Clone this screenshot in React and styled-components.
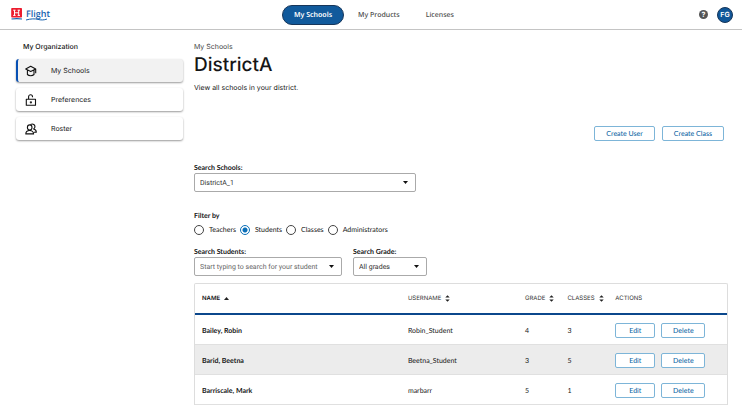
import React, { useState } from 'react'
import styled, { createGlobalStyle } from 'styled-components'

const students = [
    { name: 'Bailey, Robin', username: 'Robin_Student', grade: 4, classes: 3 },
    { name: 'Barid, Beetna', username: 'Beetna_Student', grade: 3, classes: 5 },
    { name: 'Barriscale, Mark', username: 'marbarr', grade: 5, classes: 1 },
]

const roles = ['Teachers', 'Students', 'Classes', 'Administrators']

function App() {
    const [role, setRole] = useState('Students')

    return (
        <>
            <GlobalStyle />
            <Header>
                <Logo href="#" aria-label="Flight">
                    <LogoMark />
                    <LogoText>
                        Flight
                        <LogoLine />
                    </LogoText>
                </Logo>
                <Nav>
                    <NavLink href="#" $active>My Schools</NavLink>
                    <NavLink href="#">My Products</NavLink>
                    <NavLink href="#">Licenses</NavLink>
                </Nav>
                <Account>
                    <HelpButton type="button" aria-label="Help">?</HelpButton>
                    <Avatar type="button">FG</Avatar>
                </Account>
            </Header>
            <Page>
                <Sidebar>
                    <SidebarTitle>My Organization</SidebarTitle>
                    <SidebarLink href="#" $active><CapIcon />My Schools</SidebarLink>
                    <SidebarLink href="#"><LockIcon />Preferences</SidebarLink>
                    <SidebarLink href="#"><PeopleIcon />Roster</SidebarLink>
                </Sidebar>
                <Main>
                    <Breadcrumb href="#">My Schools</Breadcrumb>
                    <Title>DistrictA</Title>
                    <Description>View all schools in your district.</Description>
                    <CreateActions>
                        <Button type="button">Create User</Button>
                        <Button type="button">Create Class</Button>
                    </CreateActions>

                    <Field $width="222px">
                        <Label htmlFor="schools">Search Schools:</Label>
                        <Control>
                            <Select id="schools"><option>DistrictA_1</option></Select>
                            <Caret />
                        </Control>
                    </Field>

                    <Filter>
                        <Legend>Filter by</Legend>
                        <Radios>
                            {roles.map((item) => (
                                <RadioLabel key={item}>
                                    <Radio
                                        type="radio"
                                        name="role"
                                        value={item}
                                        checked={role === item}
                                        onChange={() => setRole(item)}
                                    />
                                    {item}
                                </RadioLabel>
                            ))}
                        </Radios>
                    </Filter>

                    <SearchRow>
                        <Field $width="148px">
                            <Label htmlFor="students">Search Students:</Label>
                            <Control>
                                <Input id="students" placeholder="Start typing to search for your student" />
                                <Caret />
                            </Control>
                        </Field>
                        <Field $width="74px">
                            <Label htmlFor="grade">Search Grade:</Label>
                            <Control>
                                <Select id="grade"><option>All grades</option></Select>
                                <Caret />
                            </Control>
                        </Field>
                    </SearchRow>

                    <TableFrame>
                        <Table>
                            <thead>
                                <tr>
                                    <Th $width="38.7%" $strong>Name<SortUp /></Th>
                                    <Th $width="22%">Username<SortBoth /></Th>
                                    <Th $width="8%">Grade<SortBoth /></Th>
                                    <Th $width="9%">Classes<SortBoth /></Th>
                                    <Th>Actions</Th>
                                </tr>
                            </thead>
                            <tbody>
                                {students.map((student) => (
                                    <Row key={student.username}>
                                        <Td $strong>{student.name}</Td>
                                        <Td>{student.username}</Td>
                                        <Td>{student.grade}</Td>
                                        <Td>{student.classes}</Td>
                                        <Td>
                                            <RowActions>
                                                <Button type="button" $width="40px">Edit</Button>
                                                <Button type="button" $width="44px">Delete</Button>
                                            </RowActions>
                                        </Td>
                                    </Row>
                                ))}
                            </tbody>
                        </Table>
                    </TableFrame>
                </Main>
            </Page>
        </>
    )
}

export default App

function LogoMark() {
    return (
        <svg width="12" height="12" viewBox="0 0 12 12" aria-hidden="true">
            <rect x="0.2" y="0" width="10.8" height="9.6" rx="0.8" fill="#ec1c2e" />
            <path d="M2.2 2.2h2.4M2.2 7.4h2.4M6.6 2.2H9M6.6 7.4H9M3.5 2.2v5.2M7.7 2.2v5.2M3.5 4.8h4.2" stroke="#fff" strokeWidth="1" fill="none" />
            <path d="M0.5 11c3.5-.4 7-.4 10.5 0" stroke="#1560ae" strokeWidth="1.2" fill="none" />
        </svg>
    )
}

function LogoLine() {
    return (
        <LogoLineSvg viewBox="0 0 24 3" aria-hidden="true">
            <path d="M0 2C5 .6 9 .6 12 1.4S18 2.2 21 1" stroke="#1560ae" strokeWidth="1" fill="none" />
        </LogoLineSvg>
    )
}

function CapIcon() {
    return (
        <Icon viewBox="0 0 12 12">
            <path d="M.7 3.9 5.7 1.2 10.7 3.9 5.7 6.4zM2.4 4.9v4.6c1.6 1.7 5 1.7 6.6 0V4.9M10.7 3.9v4.3" />
        </Icon>
    )
}

function LockIcon() {
    return (
        <Icon viewBox="0 0 12 12">
            <path d="M1.3 5.2h9.2v6H1.3zM3.6 5.2V2.8c0-2.7 3.9-2.7 3.9 0v.4M5.9 7.2v2.2M4.8 8.3H7" />
        </Icon>
    )
}

function PeopleIcon() {
    return (
        <Icon viewBox="0 0 12 12">
            <path d="M2.4 4.6c0-3.6 4.6-3.6 4.6 0 0 3.2-4.6 3.2-4.6 0zM.8 10.9c0-4.6 7.8-4.6 7.8 0zM5.6 1.5c2.2-1.4 4.9.4 4.2 2.9-.2.8-.7 1.3-1.2 1.6 1.7.3 2.7 1.6 2.7 3.3H9" />
        </Icon>
    )
}

function Caret() {
    return (
        <CaretSvg width="5" height="3" viewBox="0 0 5 3" aria-hidden="true">
            <path d="M0 0h5L2.5 3z" fill="#111" />
        </CaretSvg>
    )
}

function SortUp() {
    return (
        <SortSvg width="5" height="7" viewBox="0 0 5 7" aria-hidden="true">
            <path d="M0 5h5L2.5 2z" />
        </SortSvg>
    )
}

function SortBoth() {
    return (
        <SortSvg width="5" height="7" viewBox="0 0 5 7" aria-hidden="true">
            <path d="M.3 2.6h4.4L2.5.3zM.3 4.4h4.4L2.5 6.7z" />
        </SortSvg>
    )
}

const GlobalStyle = createGlobalStyle`
    * {
        box-sizing: border-box;
    }

    body {
        margin: 0;
        background: #fff;
        color: #161616;
        font-family: Inter, "Liberation Sans", sans-serif;
        font-size: 7px;
        line-height: 10px;
        text-rendering: geometricPrecision;
    }

    button, input, select {
        margin: 0;
        font: inherit;
        text-rendering: inherit;
    }

    a {
        color: inherit;
        text-decoration: none;
    }
`

const Header = styled.header`
    display: grid;
    grid-template-columns: 1fr auto 1fr;
    align-items: center;
    height: 30px;
    padding: 0 9px 0 11px;
    border-bottom: 1px solid #c4c4c4;
`

const Logo = styled.a`
    display: flex;
    align-items: center;
    gap: 3px;
    justify-self: start;
    padding-bottom: 2px;
`

const LogoText = styled.span`
    position: relative;
    color: #1560ae;
    font-family: "Open Sans", sans-serif;
    font-size: 9px;
    font-weight: 600;
`

const LogoLineSvg = styled.svg`
    position: absolute;
    left: 0;
    bottom: -2px;
    width: 24px;
    height: 3px;
`

const Nav = styled.nav`
    display: flex;
    align-items: center;
    gap: 2px;
    margin-left: 4px;
`

const NavLink = styled.a`
    padding: 5px 11px 3px;
    border: 1px solid ${(props) => (props.$active ? '#17365a' : 'transparent')};
    border-radius: 10px;
    background: ${(props) => (props.$active ? '#115a9c' : 'transparent')};
    color: ${(props) => (props.$active ? '#fff' : '#4a4a4a')};
    font-family: "Noto Sans", sans-serif;
    font-weight: ${(props) => (props.$active ? 600 : 500)};
`

const Account = styled.div`
    display: flex;
    align-items: center;
    justify-content: flex-end;
    gap: 9px;
`

const HelpButton = styled.button`
    width: 9px;
    height: 9px;
    padding: 0;
    border: 0;
    border-radius: 50%;
    background: #555;
    color: #fff;
    font-size: 7px;
    font-weight: 700;
    line-height: 9px;
`

const Avatar = styled.button`
    width: 16px;
    height: 16px;
    padding: 0;
    border: 1px solid #17365a;
    border-radius: 50%;
    background: #0f5698;
    color: #fff;
    font-weight: 600;
`

const Page = styled.div`
    display: flex;
    gap: 11px;
    padding: 12px 14px 0 16px;
`

const Sidebar = styled.aside`
    display: flex;
    flex: 0 0 167px;
    flex-direction: column;
    gap: 6px;
`

const SidebarTitle = styled.h2`
    margin: 0 0 1px 7px;
    font-size: 7px;
    font-weight: 500;
`

const SidebarLink = styled.a`
    display: flex;
    align-items: center;
    gap: 14px;
    height: 23px;
    padding-left: ${(props) => (props.$active ? '7px' : '9px')};
    border-left: ${(props) => (props.$active ? '2px solid #0750b4' : '0')};
    border-radius: 3px;
    background: ${(props) => (props.$active ? '#f2f2f2' : '#fff')};
    box-shadow: 0 1px 2px rgba(0, 0, 0, 0.4);
`

const Icon = styled.svg.attrs({ 'aria-hidden': true })`
    width: 12px;
    height: 12px;
    fill: none;
    stroke: #111;
    stroke-width: 1.1;
    stroke-linejoin: round;
`

const Main = styled.main`
    flex: 1;
    min-width: 0;
`

const Breadcrumb = styled.a`
    display: block;
    color: #444;
`

const Title = styled.h1`
    margin: 0;
    font-size: 19px;
    font-weight: 500;
    line-height: 25px;
`

const Description = styled.p`
    margin: 6px 0 0;
`

const CreateActions = styled.div`
    display: flex;
    justify-content: flex-end;
    gap: 7px;
    margin: 33px 4px 22px 0;
`

const Button = styled.button`
    width: ${(props) => props.$width || 'auto'};
    height: 15px;
    padding: ${(props) => (props.$width ? '1px 0 0' : '1px 11px 0')};
    border: 1px solid #7db5d8;
    border-radius: 2px;
    background: #fff;
    color: #1269a6;
    font-family: Lato, sans-serif;
    font-weight: 500;
    line-height: 12px;
    white-space: nowrap;
    cursor: pointer;
`

const Field = styled.div`
    width: ${(props) => props.$width};
`

const Label = styled.label`
    display: block;
    font-family: Lato, sans-serif;
    font-weight: 700;
`

const Control = styled.div`
    position: relative;
`

const Select = styled.select`
    display: block;
    width: 100%;
    height: 19px;
    padding: 0 16px 0 5px;
    border: 1px solid #aaa;
    border-radius: 2px;
    background: #fff;
    color: #333;
    font-family: Roboto, sans-serif;
    appearance: none;
`

const Input = styled.input`
    display: block;
    width: 100%;
    height: 19px;
    padding: 0 16px 0 5px;
    border: 1px solid #aaa;
    border-radius: 2px;
    font-family: Roboto, sans-serif;

    &::placeholder {
        color: #666;
        opacity: 1;
    }
`

const CaretSvg = styled.svg`
    position: absolute;
    top: 8px;
    right: 8px;
    pointer-events: none;
`

const Filter = styled.fieldset`
    margin: 19px 0 12px;
    padding: 0;
    border: 0;
`

const Legend = styled.legend`
    padding: 0;
    font-family: Lato, sans-serif;
    font-weight: 700;
`

const Radios = styled.div`
    display: flex;
    gap: 4px;
    margin-top: 4px;
    font-family: Lato, sans-serif;
`

const RadioLabel = styled.label`
    display: flex;
    align-items: center;
    gap: 5px;
`

const Radio = styled.input`
    width: 10px;
    height: 10px;
    border: 1px solid #444;
    border-radius: 50%;
    background: #fff;
    appearance: none;

    &:checked {
        border-color: #0b6fb8;
        background: radial-gradient(circle, #0b6fb8 0 2px, #fff 3px);
    }
`

const SearchRow = styled.div`
    display: flex;
    gap: 11px;
    margin-bottom: 7px;
`

const TableFrame = styled.div`
    border: 1px solid #ddd;
    border-bottom: 0;
    border-radius: 2px 2px 0 0;
`

const Table = styled.table`
    width: 100%;
    border-spacing: 0;
    table-layout: fixed;
`

const Th = styled.th`
    width: ${(props) => props.$width || 'auto'};
    height: 31px;
    padding: 1px 0 0 7px;
    border-bottom: 2px solid #0b478c;
    color: ${(props) => (props.$strong ? '#111' : '#333')};
    font-size: 6px;
    font-weight: ${(props) => (props.$strong ? 600 : 400)};
    text-align: left;
    text-transform: uppercase;
    white-space: nowrap;
`

const SortSvg = styled.svg`
    margin-left: 4px;
    fill: #222;
    vertical-align: middle;
`

const Row = styled.tr`
    &:nth-child(even) {
        background: #ececec;
    }
`

const Td = styled.td`
    height: 30px;
    padding: 2px 0 0 7px;
    border-bottom: 1px solid #e0e0e0;
    font-family: Lato, sans-serif;
    font-weight: ${(props) => (props.$strong ? 700 : 400)};
`

const RowActions = styled.div`
    display: flex;
    gap: 6px;
`
